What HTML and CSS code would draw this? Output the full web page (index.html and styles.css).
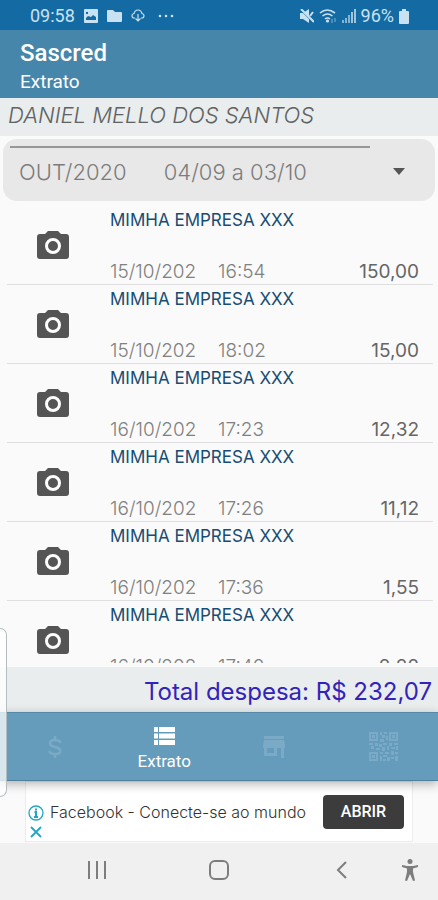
FILE: index.html
```html
<!DOCTYPE html>
<html lang="pt-BR">
<head>
<meta charset="utf-8">
<meta name="viewport" content="width=device-width, initial-scale=1">
<title>Sascred - Extrato</title>
<link rel="stylesheet" href="styles.css">
</head>
<body>
<svg class="defs" aria-hidden="true">
  <symbol id="camera" viewBox="0 0 32 30">
    <path fill="#555" d="M11 1h10l3 3h5q3 0 3 3v19q0 3-3 3H3q-3 0-3-3V7q0-3 3-3h5z"/>
    <circle cx="16" cy="16" r="6.500" fill="#555" stroke="#fff" stroke-width="3"/>
  </symbol>
</svg>
<div class="app">
  <div class="status">
    <div class="status-group">
      <span class="clock">09:58</span>
      <svg width="14" height="14" viewBox="0 0 14 14"><path fill="currentColor" fill-rule="evenodd" d="M1 0h12q1 0 1 1v12q0 1-1 1H1q-1 0-1-1V1q0-1 1-1zM2 11h10V8L9 6 7 8 4 7 2 9zM2 3v2h2V3z"/></svg>
      <svg width="15" height="14" viewBox="0 0 15 14"><path fill="currentColor" d="M1 1h5l2 2h6q1 0 1 1v8q0 1-1 1H1q-1 0-1-1V2q0-1 1-1z"/></svg>
      <svg width="14" height="14" viewBox="0 0 14 14" fill="none" stroke="currentColor" stroke-width="1.200"><path d="M4 9H3Q1 9 1 6.500 1 5 3 4.500 4 1 7 1t4 3.500q2 .5 2 2Q13 9 11 9h-1M7 5v7M4.500 9.500 7 12l2.500-2.500"/></svg>
      <svg class="dots" width="16" height="4" viewBox="0 0 16 4" fill="currentColor"><circle cx="2" cy="2" r="1.300"/><circle cx="8" cy="2" r="1.300"/><circle cx="14" cy="2" r="1.300"/></svg>
    </div>
    <div class="status-group status-right">
      <svg width="14" height="14" viewBox="0 0 14 14"><path fill="currentColor" d="M0 4h3l6-4v14l-6-4H0z"/><path stroke="#146ba3" stroke-width="1.500" d="M0 0l14 14"/><path stroke="currentColor" stroke-width="2" d="M1 0l13 13M10 7l3-4"/></svg>
      <svg width="18" height="15" viewBox="0 0 18 15" fill="none" stroke="currentColor" stroke-width="1.600"><path d="M1 4q7-6 15 0M3.500 7q5-4 10 0M6 10q2.500-2 5 0"/><circle cx="8.500" cy="12" r=".8"/><path d="M13 10v4M16 9v4" stroke-width="1" opacity=".6"/></svg>
      <svg width="14" height="14" viewBox="0 0 14 14" fill="currentColor"><path opacity=".6" d="M0 11h2v3H0zM3 9h2v5H3zM6 6h2v8H6z"/><path d="M9 3h2v11H9zM12 0h2v14h-2z" opacity=".75"/></svg>
      <span class="battery-text">96%</span>
      <svg width="10" height="15" viewBox="0 0 10 15"><path fill="currentColor" d="M3 0h4v2h2q1 0 1 1v11q0 1-1 1H1q-1 0-1-1V3q0-1 1-1h2z"/></svg>
    </div>
  </div>

  <header class="appbar">
    <h1>Sascred</h1>
    <p>Extrato</p>
  </header>

  <h2 class="holder">DANIEL MELLO DOS SANTOS</h2>

  <div class="period">
    <select aria-label="Período">
      <option>OUT/2020&nbsp;&nbsp;&nbsp;&nbsp;&nbsp; 04/09 a 03/10</option>
    </select>
    <svg class="caret" width="12" height="7" viewBox="0 0 12 7"><path fill="#555" d="M0 0h12L6 7z"/></svg>
  </div>

  <ul class="list">
    <li><svg class="cam"><use href="#camera"/></svg><div class="entry"><h3>MIMHA EMPRESA XXX</h3><div class="line"><span class="date">15/10/202</span><span>16:54</span><span class="amount">150,00</span></div></div></li>
    <li><svg class="cam"><use href="#camera"/></svg><div class="entry"><h3>MIMHA EMPRESA XXX</h3><div class="line"><span class="date">15/10/202</span><span>18:02</span><span class="amount">15,00</span></div></div></li>
    <li><svg class="cam"><use href="#camera"/></svg><div class="entry"><h3>MIMHA EMPRESA XXX</h3><div class="line"><span class="date">16/10/202</span><span>17:23</span><span class="amount">12,32</span></div></div></li>
    <li><svg class="cam"><use href="#camera"/></svg><div class="entry"><h3>MIMHA EMPRESA XXX</h3><div class="line"><span class="date">16/10/202</span><span>17:26</span><span class="amount">11,12</span></div></div></li>
    <li><svg class="cam"><use href="#camera"/></svg><div class="entry"><h3>MIMHA EMPRESA XXX</h3><div class="line"><span class="date">16/10/202</span><span>17:36</span><span class="amount">1,55</span></div></div></li>
    <li><svg class="cam"><use href="#camera"/></svg><div class="entry"><h3>MIMHA EMPRESA XXX</h3><div class="line"><span class="date">16/10/202</span><span>17:40</span><span class="amount">2,22</span></div></div></li>
  </ul>

  <p class="total">Total despesa: R$ 232,07</p>

  <nav class="tabs">
    <button type="button" aria-label="Saldo"><svg width="14" height="22" viewBox="0 0 14 22" fill="none" stroke="currentColor" stroke-width="2.500"><path d="M12.500 7Q12 4 7 4T2 7.500Q2 10 7 11t5.500 4Q12.500 18 7 18T1.500 15M7 0v4M7 18v4"/></svg></button>
    <button type="button" class="active"><svg width="21" height="18" viewBox="0 0 21 18" fill="currentColor"><path d="M0 0h4v5H0zM5 0h16v5H5zM0 6.500h4v5H0zM5 6.500h16v5H5zM0 13h4v5H0zM5 13h16v5H5z"/></svg><span>Extrato</span></button>
    <button type="button" aria-label="Lojas"><svg width="22" height="22" viewBox="0 0 22 22" fill="currentColor"><path fill-rule="evenodd" d="M1 0h20v3H1zM1 4h20l1 5v3h-1v10h-3V12h-4v8H1v-8H0V9zM4 12v5h7v-5z"/></svg></button>
    <button type="button" aria-label="QR Code"><svg width="29" height="29" viewBox="0 0 29 29" fill="currentColor"><path fill-rule="evenodd" d="M0 0h9v9H0zM2 2v5h5V2zM20 0h9v9h-9zM22 2v5h5V2zM0 20h9v9H0zM2 22v5h5v-5z"/><path d="M3 3h3v3H3zM23 3h3v3h-3zM3 23h3v3H3zM11 0h2v3h-2zM15 0h3v2h-3zM13 3h3v3h-3zM17 4h2v4h-2zM11 7h4v3h-4zM0 11h4v2H0zM6 11h3v3H6zM10 12h3v3h-3zM14 11h4v2h-4zM20 11h3v3h-3zM25 11h4v2h-4zM2 14h3v3H2zM7 16h4v2H7zM13 15h3v4h-3zM18 14h2v4h-2zM22 15h4v2h-4zM27 14h2v4h-2zM11 20h3v2h-3zM16 20h4v2h-4zM22 19h3v4h-3zM26 20h3v2h-3zM11 24h2v5h-2zM14 23h4v2h-4zM18 25h3v4h-3zM22 25h3v2h-3zM26 24h3v5h-3zM14 27h3v2h-3z"/></svg></button>
  </nav>

  <aside class="ad-area">
    <div class="ad">
      <div class="ad-marks">
        <svg width="16" height="16" viewBox="0 0 16 16" fill="none" stroke="currentColor" stroke-width="1.300"><circle cx="8" cy="8" r="7"/><path stroke-width="2" d="M8 3.500v2M6.500 7H8v5M6 12h4"/></svg>
        <svg width="12" height="12" viewBox="0 0 12 12" stroke="currentColor" stroke-width="1.800"><path d="M1 1l10 10M11 1L1 11"/></svg>
      </div>
      <span class="ad-text">Facebook - Conecte-se ao mundo</span>
      <button type="button">ABRIR</button>
    </div>
  </aside>

  <div class="sysnav">
    <button type="button" aria-label="Recentes"><svg width="20" height="18" viewBox="0 0 20 18" stroke="currentColor" stroke-width="2"><path d="M2 0v18M10 0v18M18 0v18"/></svg></button>
    <button type="button" aria-label="Início"><svg width="20" height="20" viewBox="0 0 20 20" fill="none" stroke="currentColor" stroke-width="2"><rect x="1" y="1" width="18" height="18" rx="5"/></svg></button>
    <button type="button" aria-label="Voltar"><svg width="11" height="18" viewBox="0 0 11 18" fill="none" stroke="currentColor" stroke-width="2"><path d="M10 1L2 9l8 8"/></svg></button>
    <button type="button" aria-label="Acessibilidade"><svg width="18" height="22" viewBox="0 0 18 22"><circle cx="9" cy="2.500" r="2.500" fill="currentColor"/><path fill="currentColor" d="M1 6l5 1h6l5-1v2l-5 1.500V13l2 8.500-2 .5-3-7-3 7-2-.5L6 13V9.500L1 8z"/></svg></button>
  </div>

  <div class="edge-panel"></div>
</div>
</body>
</html>
```
FILE: styles.css
```css
* { box-sizing: border-box; }
body {
  margin: 0;
  background: #fafafa;
  font-family: Inter, "Open Sans", sans-serif;
}
h1, h2, h3, p, ul { margin: 0; padding: 0; font-weight: 400; }
button {
  border: 0;
  padding: 0;
  background: none;
  color: inherit;
  font-family: Roboto, sans-serif;
}
svg { display: block; flex: none; }
.defs { position: absolute; width: 0; height: 0; }

.app {
  position: relative;
  display: flex;
  flex-direction: column;
  height: 100vh;
  overflow: hidden;
}
.app > * { flex: none; }

.status {
  display: flex;
  justify-content: space-between;
  height: 30px;
  padding: 2px 29px 0 30px;
  background: #146ba3;
  color: #c9e2f2;
  font: 18px/28px Roboto, sans-serif;
}
.status-group { display: flex; align-items: center; gap: 9px; }
.status-right { gap: 5px; }
.dots { margin-left: 4px; }

.appbar {
  height: 68px;
  padding: 8px 20px 0;
  background: #4786ab;
  color: #fff;
  font-family: Roboto, sans-serif;
}
.appbar h1 { font-size: 24px; line-height: 30px; font-weight: 500; }
.appbar p { font-size: 19px; line-height: 28px; }

.holder {
  height: 38px;
  padding: 0 8px;
  background: #e9eded;
  color: #606262;
  font-size: 22px;
  line-height: 35px;
  font-style: italic;
  font-weight: 300;
  white-space: nowrap;
}

.period {
  position: relative;
  margin: 3px 3px 5px;
  border-radius: 14px;
  background: #e8e8e8;
}
.period::before {
  content: "";
  position: absolute;
  top: 7px;
  left: 7px;
  right: 65px;
  height: 2px;
  background: #979797;
}
.period select {
  display: block;
  width: 100%;
  height: 62px;
  padding: 4px 40px 0 16px;
  border: 0;
  background: none;
  appearance: none;
  color: #7c7c7c;
  font: 300 22px Inter, sans-serif;
}
.caret { position: absolute; top: 29px; right: 30px; pointer-events: none; }

.app > .list {
  flex: 1 1 0;
  min-height: 0;
  margin: 0 5px 4px 7px;
  overflow: hidden;
  list-style: none;
}
.list li {
  display: flex;
  align-items: center;
  gap: 41px;
  height: 79px;
  padding: 0 14px 0 30px;
  border-bottom: 1px solid #dedede;
}
.cam { width: 32px; height: 30px; }
.entry {
  flex: 1;
  display: flex;
  flex-direction: column;
  justify-content: space-between;
  height: 100%;
  padding: 4px 0 0;
}
.entry h3 { color: #174d73; font-size: 17px; line-height: 20px; }
.line {
  display: flex;
  color: #808080;
  font-size: 19px;
  line-height: 24px;
  font-weight: 300;
}
.date { width: 108px; }
.amount { margin-left: auto; color: #666; font-weight: 400; }

.total {
  padding: 4px 6px 0 0;
  background: #e9eded;
  color: #3223b9;
  font-size: 24px;
  line-height: 41px;
  text-align: right;
}

.tabs {
  position: relative;
  display: grid;
  grid-template-columns: repeat(4, 1fr);
  height: 69px;
  background: #669cbb;
  border-top: 1px solid #5589a8;
  border-bottom: 1px solid #4d7f9e;
  box-shadow: 0 3px 10px rgba(0, 0, 0, .3);
  color: #7aaac6;
}
.tabs button {
  display: flex;
  flex-direction: column;
  align-items: center;
  justify-content: center;
  gap: 6px;
  font-size: 17px;
  line-height: 20px;
}
.tabs .active { padding-top: 5px; color: #fff; }

.ad-area { padding: 0 25px 1px; }
.ad {
  display: flex;
  align-items: center;
  height: 61px;
  padding: 0 8px 0 2px;
  background: #fff;
  border: 1px solid #ececec;
}
.ad-marks {
  display: flex;
  flex-direction: column;
  align-items: center;
  gap: 5px;
  width: 16px;
  margin-top: 20px;
  color: #22a5c4;
}
.ad-text {
  margin-left: 6px;
  color: #333;
  font-size: 16px;
  font-weight: 300;
  white-space: nowrap;
}
.ad button {
  width: 81px;
  height: 34px;
  margin-left: auto;
  border-radius: 4px;
  background: #3c3c3c;
  color: #fff;
  font-size: 16px;
  font-weight: 500;
}

.sysnav {
  display: grid;
  grid-template-columns: 1fr 1fr 1fr 14px;
  height: 57px;
  padding: 0 21px 3px 36px;
  background: #f0f0f0;
  color: #7d7d7d;
}
.sysnav button { display: flex; align-items: center; justify-content: center; }

.edge-panel {
  position: absolute;
  left: 0;
  bottom: 103px;
  width: 7px;
  height: 169px;
  border: 1px solid #b5bdc0;
  border-left: 0;
  border-radius: 0 7px 7px 0;
  background: rgba(255, 255, 255, .75);
}
```
